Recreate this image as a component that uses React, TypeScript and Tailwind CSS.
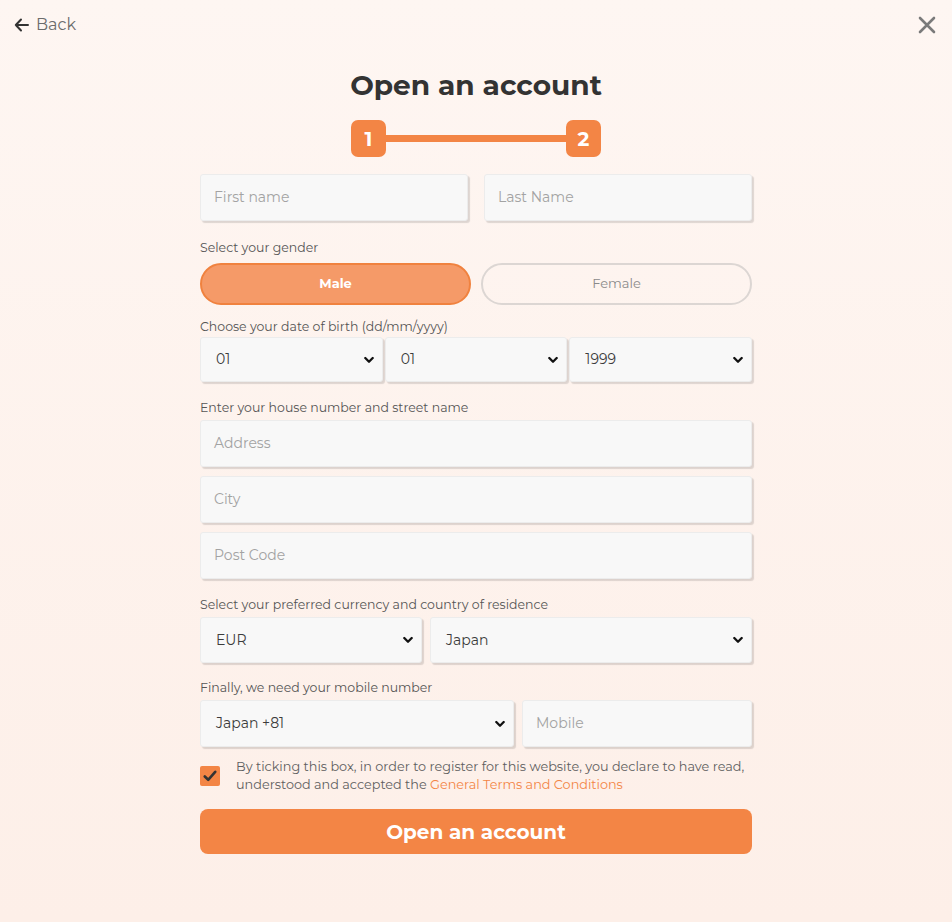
import React from "react";

const font = { fontFamily: "Montserrat, 'Noto Sans', Inter, sans-serif" };

function Chevron() {
  return (
    <svg width="10" height="7" viewBox="0 0 10 7" className="pointer-events-none absolute right-[8px] top-1/2 -translate-y-1/2">
      <path d="M1.3 1.5 L5 5.2 L8.7 1.5" fill="none" stroke="#111" strokeWidth="2.3" strokeLinecap="round" strokeLinejoin="round" />
    </svg>
  );
}

function Field({ placeholder, className = "" }: { placeholder: string; className?: string }) {
  return (
    <div className={`flex h-[47px] items-center rounded-[3px] border border-[#ececec] bg-[#f8f8f8] pl-[13px] text-[14px] text-[#a3a3a3] shadow-[2px_2px_1px_rgba(0,0,0,0.13)] ${className}`}>
      {placeholder}
    </div>
  );
}

function Select({ value, className = "", h = "h-[46px]" }: { value: string; className?: string; h?: string }) {
  return (
    <div className={`relative flex ${h} items-center rounded-[3px] border border-[#ececec] bg-[#f8f8f8] pl-[15px] text-[14px] text-[#3c3c3c] shadow-[2px_2px_1px_rgba(0,0,0,0.13)] ${className}`}>
      {value}
      <Chevron />
    </div>
  );
}

function Label({ children }: { children: React.ReactNode }) {
  return <div className="text-[12.5px] leading-[16px] text-[#555]">{children}</div>;
}

export default function App() {
  return (
    <div style={font} className="min-h-[922px] w-full bg-gradient-to-b from-[#fef6f2] to-[#fdefe8]">
      <div className="flex h-[48px] items-center justify-between px-[14px] pt-[2px]">
        <div className="flex items-center gap-[7px] text-[16px] text-[#6b6b6b]">
          <svg width="15" height="14" viewBox="0 0 15 14">
            <path d="M7 1.5 L1.8 7 L7 12.5 M1.8 7 H14" fill="none" stroke="#333" strokeWidth="2" strokeLinecap="round" strokeLinejoin="round" />
          </svg>
          <span>Back</span>
        </div>
        <svg width="18" height="18" viewBox="0 0 18 18" className="mr-[2px]">
          <path d="M2 2 L16 16 M16 2 L2 16" stroke="#7a7a7a" strokeWidth="2.6" strokeLinecap="round" />
        </svg>
      </div>

      <div className="mx-auto w-[552px]">
        <h1 className="mt-[20px] text-center text-[28px] font-bold leading-[34px] text-[#333]">Open an account</h1>

        <div className="mt-[18px] flex items-center justify-center">
          <div className="flex h-[37px] w-[35px] items-center justify-center rounded-[7px] bg-[#f38545] text-[20px] font-bold text-white">1</div>
          <div className="h-[7px] w-[180px] bg-[#f38545]" />
          <div className="flex h-[37px] w-[35px] items-center justify-center rounded-[7px] bg-[#f38545] text-[20px] font-bold text-white">2</div>
        </div>

        <div className="mt-[17px] flex gap-[16px]">
          <Field placeholder="First name" className="flex-1" />
          <Field placeholder="Last Name" className="flex-1" />
        </div>

        <div className="mt-[19px]">
          <Label>Select your gender</Label>
        </div>
        <div className="mt-[7px] flex gap-[10px]">
          <div className="flex h-[42px] flex-1 items-center justify-center rounded-full border-2 border-[#f0823f] bg-[#f59a68] text-[13px] font-bold text-white">Male</div>
          <div className="flex h-[42px] flex-1 items-center justify-center rounded-full border-2 border-[#dcd6d3] text-[13px] text-[#8a8a8a]">Female</div>
        </div>

        <div className="mt-[14px]">
          <Label>Choose your date of birth (dd/mm/yyyy)</Label>
        </div>
        <div className="mt-[2px] flex gap-[2px]">
          <Select value="01" className="flex-1" h="h-[45px]" />
          <Select value="01" className="flex-1" h="h-[45px]" />
          <Select value="1999" className="flex-1" h="h-[45px]" />
        </div>

        <div className="mt-[18px]">
          <Label>Enter your house number and street name</Label>
        </div>
        <div className="mt-[4px] flex flex-col gap-[9px]">
          <Field placeholder="Address" />
          <Field placeholder="City" />
          <Field placeholder="Post Code" />
        </div>

        <div className="mt-[18px]">
          <Label>Select your preferred currency and country of residence</Label>
        </div>
        <div className="mt-[4px] flex gap-[8px]">
          <Select value="EUR" className="w-[222px]" />
          <Select value="Japan" className="flex-1" />
        </div>

        <div className="mt-[17px]">
          <Label>Finally, we need your mobile number</Label>
        </div>
        <div className="mt-[4px] flex gap-[8px]">
          <Select value="Japan +81" className="w-[314px]" h="h-[47px]" />
          <Field placeholder="Mobile" className="flex-1" />
        </div>

        <div className="mt-[11px] flex items-start gap-[16px]">
          <div className="mt-[8px] flex h-[20px] w-[20px] shrink-0 items-center justify-center rounded-[2px] bg-[#f38545]">
            <svg width="14" height="12" viewBox="0 0 14 12">
              <path d="M1.8 6.5 L5.2 9.8 L12.2 1.8" fill="none" stroke="#333" strokeWidth="2.6" strokeLinecap="round" strokeLinejoin="round" />
            </svg>
          </div>
          <p className="text-[12.8px] leading-[18px] text-[#5f5f5f]">
            By ticking this box, in order to register for this website, you declare to have read, understood and accepted the{" "}
            <span className="text-[#f38545]">General Terms and Conditions</span>
          </p>
        </div>

        <div className="mt-[15px] flex h-[45px] items-center justify-center rounded-[8px] bg-[#f38545] text-[20px] font-bold text-white">
          Open an account
        </div>
      </div>
    </div>
  );
}
